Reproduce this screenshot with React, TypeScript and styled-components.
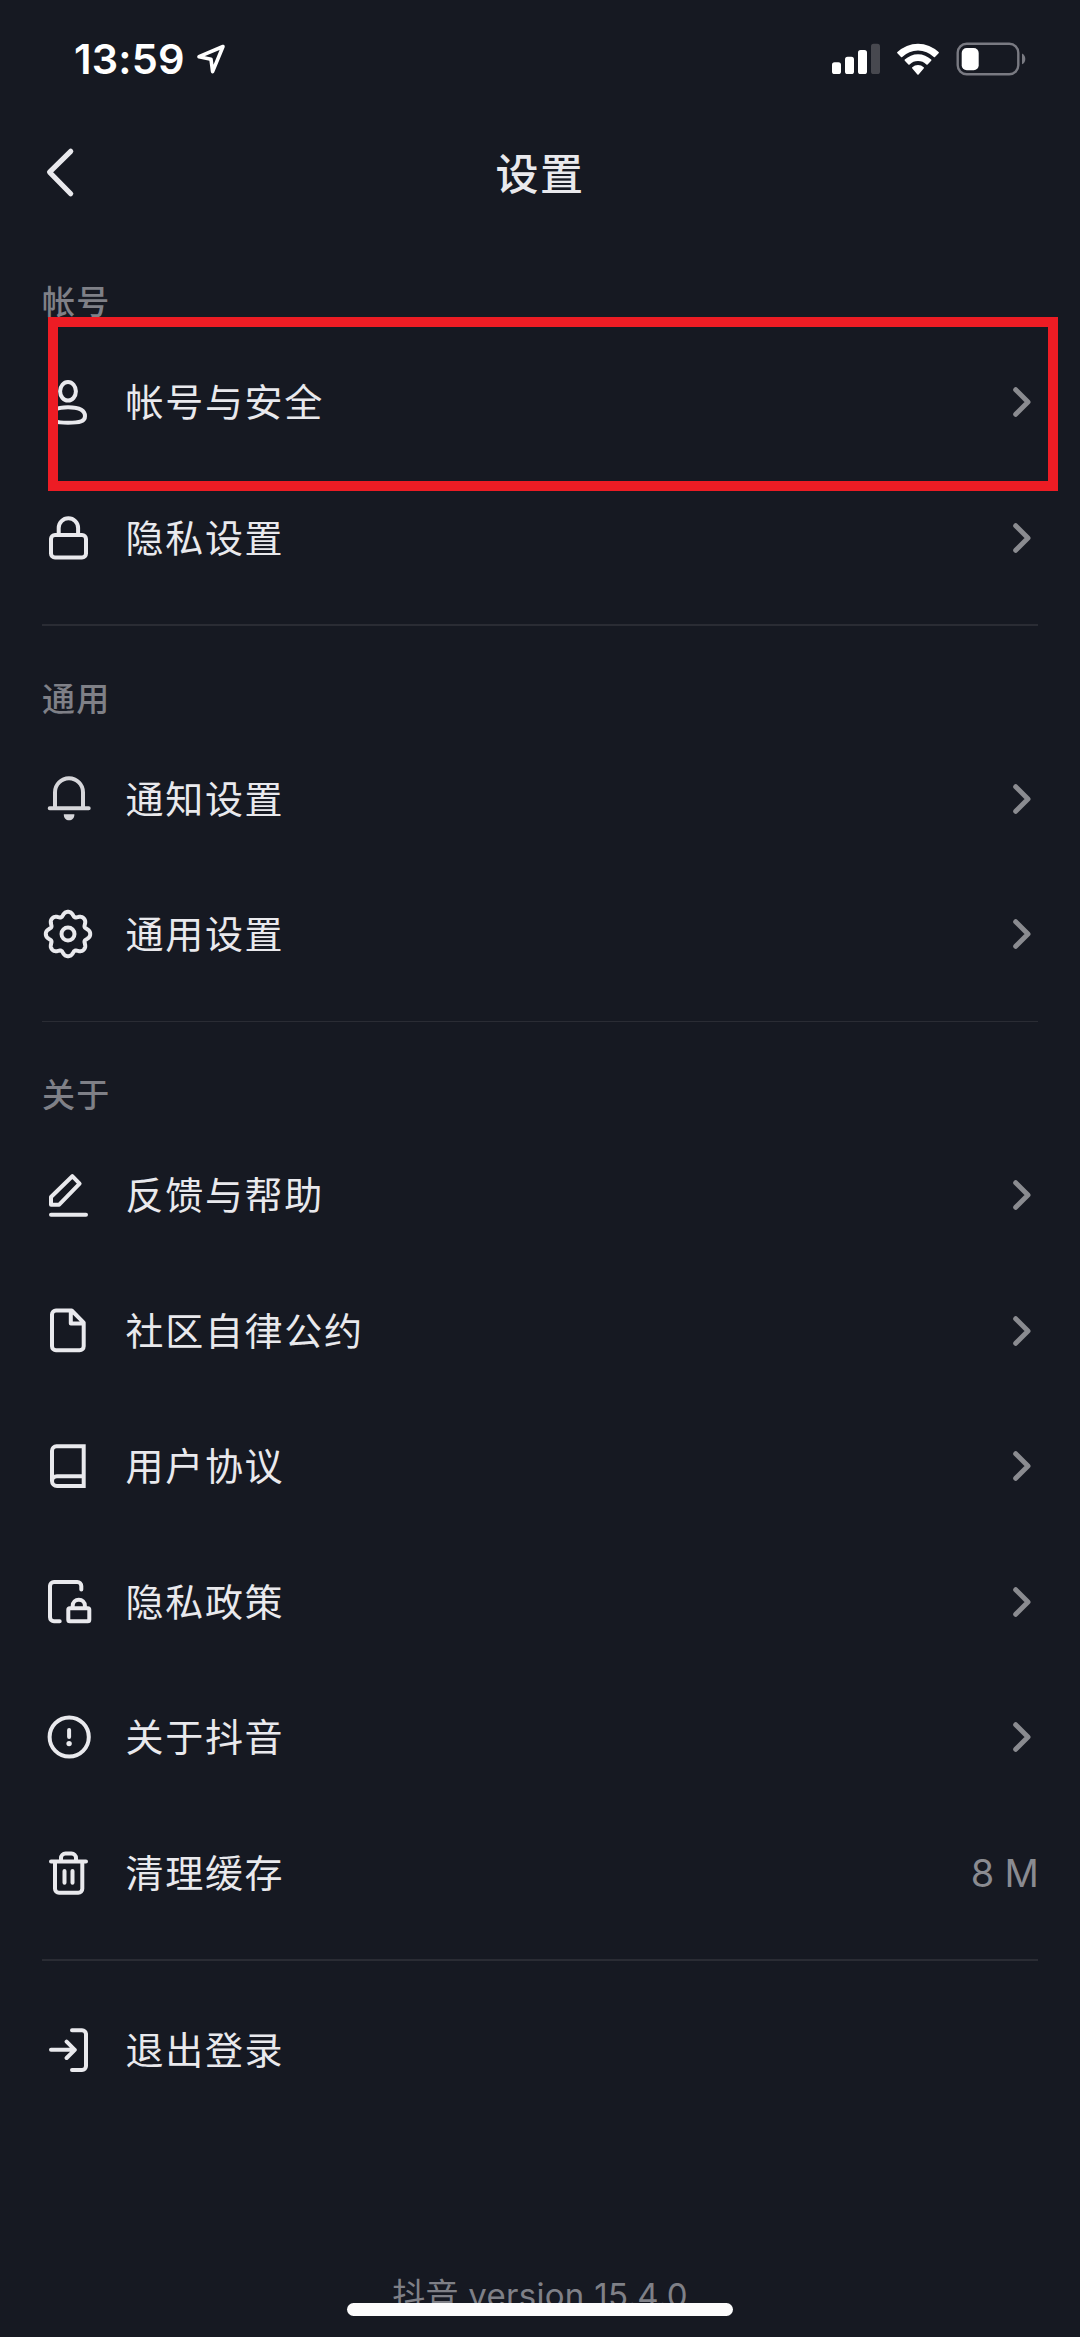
import React from "react";
import styled, { createGlobalStyle } from "styled-components";

const GlobalStyle = createGlobalStyle`
  html, body { margin: 0; padding: 0; background: #161922; }
  * { box-sizing: border-box; }
`;

const latin = `Inter, "Noto Sans CJK SC", sans-serif`;
const cjk = `"Noto Sans CJK SC", sans-serif`;

const Screen = styled.main`
  position: relative;
  width: 1080px;
  height: 2337px;
  overflow: hidden;
  display: flex;
  flex-direction: column;
  background: #161922;
  color: #e9e9ed;
  font-family: ${cjk};
`;

const StatusBar = styled.header`
  flex: none;
  height: 118px;
  padding: 0 54px 0 74px;
  display: flex;
  align-items: center;
  justify-content: space-between;
`;

const Clock = styled.div`
  display: flex;
  align-items: center;
  gap: 11px;
  color: #fff;
  font: 600 41.5px/50px ${latin};
  letter-spacing: 0.2px;
`;

const StatusIcons = styled.div`
  display: flex;
  align-items: center;
  gap: 17px;
`;

const NavBar = styled.nav`
  flex: none;
  height: 110px;
  padding: 0 42px;
  display: grid;
  grid-template-columns: 60px 1fr 60px;
  align-items: center;
`;

const BackButton = styled.button`
  width: 60px;
  height: 60px;
  padding: 0;
  border: 0;
  background: none;
  color: inherit;
`;

const Title = styled.h1`
  margin: 0;
  padding-bottom: 5px;
  text-align: center;
  font-size: 43px;
  line-height: 60px;
  font-weight: 500;
  letter-spacing: 1.5px;
`;

const Section = styled.section`
  flex: none;
  padding: 0 42px;
`;

const SectionLabel = styled.h2<{ $height: number }>`
  margin: 0;
  height: ${(p) => p.$height}px;
  padding-bottom: 10px;
  display: flex;
  align-items: flex-end;
  color: #7f8087;
  font-size: 33px;
  line-height: 48px;
  font-weight: 500;
  letter-spacing: 1.2px;
`;

const Row = styled.div`
  height: 135.5px;
  display: flex;
  align-items: center;
`;

const RowIcon = styled.svg`
  flex: none;
  width: 52px;
  height: 52px;
  overflow: visible;
  fill: none;
  stroke: currentColor;
  stroke-width: 4;
  stroke-linecap: round;
  stroke-linejoin: round;
`;

const RowLabel = styled.span`
  flex: 1;
  margin-left: 31.5px;
  padding-bottom: 4px;
  font-size: 38px;
  line-height: 56px;
  font-weight: 400;
  letter-spacing: 1.7px;
`;

const RowValue = styled.span`
  color: #8a8b91;
  font: 400 38px/48px ${latin};
  letter-spacing: -0.9px;
  word-spacing: 1.5px;
`;

const ChevronIcon = styled.svg`
  width: 26px;
  height: 32px;
  margin-right: 2px;
  fill: none;
  stroke: #8a8b90;
  stroke-width: 5;
  stroke-linecap: round;
  stroke-linejoin: round;
`;

const Divider = styled.hr<{ $after: number }>`
  margin: 19px 42px ${(p) => p.$after}px;
  flex: none;
  height: 1.5px;
  border: 0;
  background: #2a2c34;
`;

const Highlight = styled.div`
  position: absolute;
  left: 48px;
  top: 317px;
  width: 1010px;
  height: 174px;
  border: 10px solid #ed1c24;
`;

const Version = styled.footer`
  margin-top: auto;
  flex: none;
  height: 66px;
  text-align: center;
  color: #7f8087;
  font: 400 33px/48px ${latin};
  letter-spacing: 0.3px;
  white-space: nowrap;
`;

const HomeIndicator = styled.div`
  position: absolute;
  left: 347px;
  top: 2303px;
  width: 386px;
  height: 13px;
  border-radius: 7px;
  background: #fcfcfd;
`;

const gearPath = (() => {
  const points: string[] = [];
  for (let i = 0; i < 240; i++) {
    const a = (i / 240) * Math.PI * 2;
    const r = 20.4 + 2.1 * Math.cos(8 * a) - 0.3 * Math.cos(16 * a);
    points.push(`${(26 + r * Math.sin(a)).toFixed(2)} ${(26 - r * Math.cos(a)).toFixed(2)}`);
  }
  return `M${points.join("L")}Z`;
})();

const icons = {
  user: (
    <>
      <ellipse cx="26" cy="15.3" rx="7.9" ry="9.3" />
      <path d="M26 31.3C37 31.3 43 34.5 43 40.2C43 45.3 38 46.7 26 46.7S9 45.3 9 40.2C9 34.5 15 31.3 26 31.3Z" />
    </>
  ),
  lock: (
    <>
      <rect x="9" y="23" width="35" height="22.4" rx="4" />
      <path d="M16.7 23V16a9.7 9.7 0 0 1 19.4 0V23" />
    </>
  ),
  bell: (
    <g stroke="#d6d6da">
      <path d="M13 35.3V19.3a14 14 0 0 1 28 0V35.3M7.7 35.3H46.7" />
      <path d="M21.8 41.3h10.6c0 4-2.4 6-5.3 6s-5.3-2-5.3-6z" fill="#d6d6da" stroke="none" />
    </g>
  ),
  gear: (
    <>
      <path d={gearPath} />
      <circle cx="26" cy="26" r="6.5" />
    </>
  ),
  pencil: <path d="M9 28L30.3 7.2L37.6 14.7L17.2 35.7H9ZM9 45.8H44" />,
  file: <path d="M29.7 5.5H14a4 4 0 0 0-4 4V41.2a4 4 0 0 0 4 4H37.7a4 4 0 0 0 4-4V17.6L29.7 5.5M28.8 5.7V18.6H41.5" />,
  book: (
    <path d="M41.7 36.3H15a5 5 0 0 0-5 4.8M14.5 6.3H41.7V46H15a5 5 0 0 1-5-5V10.8a4.5 4.5 0 0 1 4.5-4.5Z" strokeLinejoin="miter" />
  ),
  policy: (
    <>
      <path d="M39.3 13.5V10a4 4 0 0 0-4-4H12a4 4 0 0 0-4 4V41.3a4 4 0 0 0 4 4H17.7" />
      <rect x="26.3" y="32.3" width="21" height="13" rx="1.5" />
      <path d="M30.7 32V29.8a6.1 6.1 0 0 1 12.2 0V32" />
    </>
  ),
  about: (
    <>
      <circle cx="27.2" cy="26" r="19.6" />
      <path d="M27.1 19V26" />
      <circle cx="27.1" cy="32.6" r="2.7" fill="currentColor" stroke="none" />
    </>
  ),
  trash: (
    <>
      <path d="M9 14.6H44M13 14.6V41.8a4 4 0 0 0 4 4H36.3a4 4 0 0 0 4-4V14.6M19 14.3V11a4.5 4.5 0 0 1 4.5-4.5H29.5A4.5 4.5 0 0 1 34 11V14.3" />
      <path d="M22.5 24V35.8M30.5 24V35.8" />
    </>
  ),
  logout: <path d="M30 6.3H40a4 4 0 0 1 4 4V42a4 4 0 0 1-4 4H30M9 25.8H32.7M24.6 17.6L32.8 25.8L24.6 34" />,
};

type Item = { icon: keyof typeof icons; label: string; value?: string; plain?: boolean };

const sections: { label?: string; height: number; items: Item[] }[] = [
  {
    label: "帐号",
    height: 106.25,
    items: [
      { icon: "user", label: "帐号与安全" },
      { icon: "lock", label: "隐私设置" },
    ],
  },
  {
    label: "通用",
    height: 105,
    items: [
      { icon: "bell", label: "通知设置" },
      { icon: "gear", label: "通用设置" },
    ],
  },
  {
    label: "关于",
    height: 105,
    items: [
      { icon: "pencil", label: "反馈与帮助" },
      { icon: "file", label: "社区自律公约" },
      { icon: "book", label: "用户协议" },
      { icon: "policy", label: "隐私政策" },
      { icon: "about", label: "关于抖音" },
      { icon: "trash", label: "清理缓存", value: "8 M" },
    ],
  },
  { height: 0, items: [{ icon: "logout", label: "退出登录", plain: true }] },
];

function Trailing({ item }: { item: Item }) {
  if (item.plain) return null;
  if (item.value) return <RowValue>{item.value}</RowValue>;
  return (
    <ChevronIcon viewBox="0 0 26 32">
      <path d="M5.7 3.7L18 16L5.7 28.3" />
    </ChevronIcon>
  );
}

export default function App() {
  return (
    <Screen>
      <GlobalStyle />
      <StatusBar>
        <Clock>
          <span>13:59</span>
          <svg width="30" height="32" viewBox="0 0 30 32" fill="none" stroke="#fff" strokeWidth="3.6" strokeLinejoin="round">
            <path d="M27 3.5L3 13.7L15 16.2L16.6 28.6Z" />
          </svg>
        </Clock>
        <StatusIcons>
          <svg width="48" height="32" viewBox="0 0 48 32" fill="#fff">
            <rect x="0" y="19.3" width="9" height="11.7" rx="2.6" />
            <rect x="13" y="13.7" width="9" height="17.3" rx="2.6" />
            <rect x="26" y="7" width="9" height="24" rx="2.6" />
            <rect x="39" y="0.7" width="9" height="30.3" rx="2.6" fill="#47484f" />
          </svg>
          <svg width="42" height="33" viewBox="0 0 42 33" fill="#fff">
            <path d="M0.4 9.1a29.5 29.5 0 0 1 41.2 0c.4.4.4.8 0 1.2l-3.6 3.6c-.4.4-.8.4-1.2 0a22.6 22.6 0 0 0-31.6 0c-.4.4-.8.4-1.2 0l-3.6-3.6c-.4-.4-.4-.8 0-1.2z" />
            <path d="M7.8 16.6a19 19 0 0 1 26.4 0c.4.4.4.8 0 1.2l-3.6 3.6c-.4.4-.8.4-1.2 0a12.2 12.2 0 0 0-16.8 0c-.4.4-.8.4-1.2 0l-3.6-3.6c-.4-.4-.4-.8 0-1.2z" />
            <path d="M15.3 24.3a8.4 8.4 0 0 1 11.4 0c.4.4.4.8 0 1.2l-5.1 5.9c-.4.4-.8.4-1.2 0l-5.1-5.9c-.4-.4-.4-.8 0-1.2z" />
          </svg>
          <svg width="70" height="34" viewBox="0 0 70 34">
            <rect x="1.7" y="1.7" width="60.6" height="30.6" rx="9" fill="none" stroke="#797a82" strokeWidth="2.4" />
            <rect x="5.7" y="6" width="17" height="22.3" rx="5" fill="#fff" />
            <path d="M66 11.5c4.4 2 4.4 8.8 0 10.8z" fill="#797a82" />
          </svg>
        </StatusIcons>
      </StatusBar>
      <NavBar>
        <BackButton aria-label="返回">
          <svg width="60" height="60" viewBox="0 0 60 60" fill="none" stroke="currentColor" strokeWidth="5.2" strokeLinecap="round" strokeLinejoin="round">
            <path d="M28.7 8.3L7.6 29.2L28.7 50.7" />
          </svg>
        </BackButton>
        <Title>设置</Title>
      </NavBar>
      {sections.map((section, i) => (
        <React.Fragment key={i}>
          {i > 0 && <Divider $after={section.label ? 0 : 21} />}
          <Section>
            {section.label && <SectionLabel $height={section.height}>{section.label}</SectionLabel>}
            {section.items.map((item) => (
              <Row key={item.label}>
                <RowIcon viewBox="0 0 52 52">{icons[item.icon]}</RowIcon>
                <RowLabel>{item.label}</RowLabel>
                <Trailing item={item} />
              </Row>
            ))}
          </Section>
        </React.Fragment>
      ))}
      <Version>抖音 version 15.4.0</Version>
      <Highlight />
      <HomeIndicator />
    </Screen>
  );
}
